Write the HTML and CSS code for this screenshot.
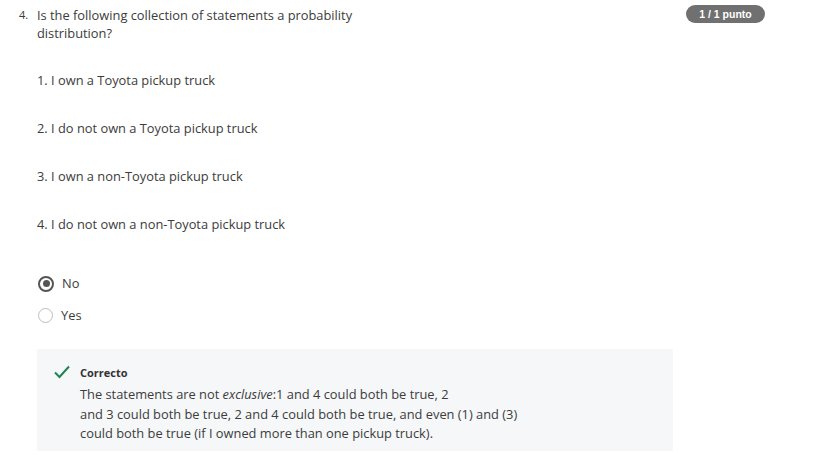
FILE: index.html
```html
<!DOCTYPE html>
<html>
<head>
<meta charset="utf-8">
<link rel="stylesheet" href="styles.css">
</head>
<body>
<div class="question">
  <div class="head">
    <div class="num">4.</div>
    <div class="prompt">
      <p class="qtext">Is the following collection of statements a probability distribution?</p>
      <p class="stmt">1. I own a Toyota pickup truck</p>
      <p class="stmt">2. I do not own a Toyota pickup truck</p>
      <p class="stmt">3. I own a non-Toyota pickup truck</p>
      <p class="stmt">4. I do not own a non-Toyota pickup truck</p>
      <div class="options">
        <div class="opt"><span class="radio checked"></span><span>No</span></div>
        <div class="opt"><span class="radio"></span><span>Yes</span></div>
      </div>
      <div class="feedback">
        <svg class="check" width="16" height="14" viewBox="0 0 16 14"><path d="M1 7.5 L5.5 12 L15 1.5" fill="none" stroke="#1f8354" stroke-width="2"/></svg>
        <div class="fbody">
          <div class="fttl">Correcto</div>
          <p class="ftext">The statements are not <em>exclusive</em>:1 and 4 could both be true, 2<br>and 3 could both be true, 2 and 4 could both be true, and even (1) and (3)<br>could both be true (if I owned more than one pickup truck).</p>
        </div>
      </div>
    </div>
    <div class="badge">1 / 1 punto</div>
  </div>
</div>
</body>
</html>
```
FILE: styles.css
```css
body {
  margin: 0;
  background: #fff;
  font-family: "Open Sans", sans-serif;
  color: #3c3c3c;
  font-size: 12.85px;
}
.question {
  padding: 6px 0 0 19px;
}
.head {
  display: flex;
  align-items: flex-start;
}
.num {
  width: 18px;
  font-size: 11px;
  line-height: 18px;
}
.prompt {
  width: 636px;
}
.qtext {
  margin: 0;
  width: 330px;
  line-height: 18px;
}
.stmt {
  margin: 28px 0 0;
  line-height: 20px;
}
.options {
  margin-top: 41px;
  display: flex;
  flex-direction: column;
  gap: 15px;
}
.opt {
  display: flex;
  align-items: center;
  gap: 8px;
  height: 17px;
  line-height: 17px;
}
.radio {
  width: 13px;
  height: 13px;
  border: 1.5px solid #bdbdbd;
  border-radius: 50%;
  margin-left: 1px;
  box-sizing: content-box;
  position: relative;
}
.radio.checked {
  border: 2px solid #555;
  width: 12px;
  height: 12px;
}
.radio.checked::after {
  content: "";
  position: absolute;
  left: 2.5px;
  top: 2.5px;
  width: 7px;
  height: 7px;
  border-radius: 50%;
  background: #555;
}
.feedback {
  margin-top: 25px;
  background: #f5f7f8;
  display: flex;
  gap: 10px;
  padding: 15px 16px 10px 17px;
  height: 77px;
}
.check {
  flex: none;
  margin-top: 1px;
}
.fttl {
  font-weight: bold;
  font-size: 11px;
  line-height: 18px;
  color: #333;
}
.ftext {
  margin: 3px 0 0;
  line-height: 19.5px;
}
.badge {
  margin-left: 13px;
  margin-top: -1px;
  background: #707070;
  color: #fff;
  font-family: "Liberation Sans", Arial, sans-serif;
  font-weight: bold;
  font-size: 10.5px;
  height: 18px;
  line-height: 18px;
  width: 79px;
  text-align: center;
  border-radius: 9px;
}
```
